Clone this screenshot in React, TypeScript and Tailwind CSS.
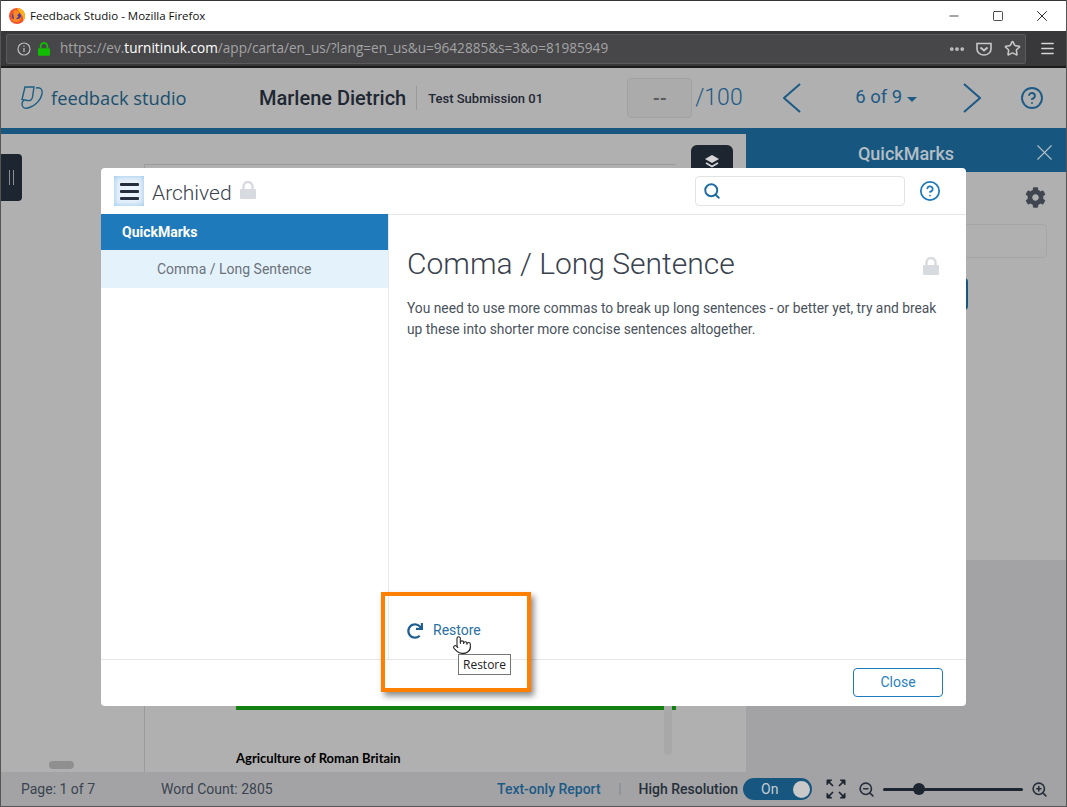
import { HelpCircle, Menu, Minus, MoreHorizontal, Pointer, Search, Square, Star, X, ZoomIn, ZoomOut } from "lucide-react"
import { FaCog, FaRedo } from "react-icons/fa"

const FirefoxLogo = () => (
  <svg width="16" height="16" viewBox="0 0 16 16" className="shrink-0">
    <circle cx="8" cy="8" r="8" fill="#f4522d" />
    <path d="M8 0a8 8 0 0 1 8 8c0 2-1 4-2 5 .6-3-.4-6-3-8-1-.8-2-2-3-5z" fill="#ffb31a" />
    <circle cx="7.5" cy="8" r="4.4" fill="#3d3ca8" />
    <path d="M5 2c2 0 5 1 5.5 3.5L8 7l1.5 1.5L7 11c2 .5 4-.5 5-2 0 3-2 5-5 5-2 0-4-1-5-3 2 1 3 0 3-1C4 8 4 4 5 2z" fill="#ff8a1f" />
  </svg>
)

const FeedbackLogo = () => (
  <svg width="24" height="26" viewBox="0 0 24 26" fill="none" stroke="#1d5f86" strokeWidth="1.4">
    <path d="M5 2h9l-1.5 10c-.4 3-2.500 4-5 3.500L2 14.500 5 2z" />
    <path d="M16 3c5-1 7 2 6 6-1 5-6 12-14 14-4 1-6-1-6-4 0-2 1-3 2-4" />
  </svg>
)

const LockIcon = ({ w, h, color }: { w: number; h: number; color: string }) => (
  <svg width={w} height={h} viewBox="0 0 16 18" className="shrink-0">
    <path d="M3.500 8V5.500a4.500 4.500 0 0 1 9 0V8" fill="none" stroke={color} strokeWidth="2.400" />
    <rect x="0" y="8" width="16" height="10" rx="1.200" fill={color} />
  </svg>
)

const Chevron = ({ flip }: { flip?: boolean }) => (
  <svg width="18" height="30" viewBox="0 0 18 30" fill="none" stroke="#1d5a85" strokeWidth="2" className="shrink-0">
    <path d={flip ? "M1 1l16 14L1 29" : "M17 1L1 15l16 14"} />
  </svg>
)

const AppHeader = () => (
  <div className="h-[60px] bg-[#b0b0b0] flex items-center shrink-0 font-['Roboto',sans-serif]">
    <div className="ml-[19px] w-[239px] flex items-center gap-[7px]">
      <FeedbackLogo />
      <span className="font-['Open_Sans',sans-serif] text-[18.300px] text-[#1a4f6e]">feedback studio</span>
    </div>
    <span className="text-[20px] font-medium text-[#1f2733] pr-[10px] border-r border-[#9a9a9a] leading-[24px]">Marlene Dietrich</span>
    <span className="ml-[11px] text-[13px] font-medium text-[#1f2733] pt-[2px] w-[199px]">Test Submission 01</span>
    <div className="w-[65px] h-[40px] rounded-[4px] border border-[#a2a2a2] bg-[#ababab] flex items-center justify-center text-[18px] font-bold text-[#5c5c5c]">--</div>
    <span className="ml-[3px] text-[23px] font-light text-[#1d5a85] w-[79px]">/100</span>
    <div className="ml-[9px]"><Chevron /></div>
    <div className="ml-[54px] w-[108px] flex items-center gap-[5px] text-[18.500px] text-[#1d5a85]">
      6 of 9
      <span className="border-x-[5px] border-t-[5px] border-x-transparent border-t-[#1d5a85] mt-[2px]" />
    </div>
    <Chevron flip />
    <HelpCircle size={24} strokeWidth={1.900} className="text-[#1d5a85] ml-[39px]" />
  </div>
)

const Footer = () => (
  <div className="h-[34px] bg-[#a3a3a5] flex items-center shrink-0 text-[14px] text-[#3a4450] font-['Roboto',sans-serif]">
    <span className="ml-[20px] w-[140px]">Page: 1 of 7</span>
    <span className="w-[336px]">Word Count: 2805</span>
    <span className="font-medium text-[#1d5a85]">Text-only Report</span>
    <span className="ml-[18px] h-[12px] border-l-2 border-[#8f959b]" />
    <span className="ml-[18px] font-medium text-[#262f3b]">High Resolution</span>
    <div className="ml-[5px] w-[69px] h-[22px] rounded-full bg-[#17577f] flex items-center justify-between pl-[18px] pr-[2px] text-[#c6ccd2]">
      On
      <span className="w-[17px] h-[17px] rounded-full bg-[#c9c9c9]" />
    </div>
    <svg width="20" height="20" viewBox="0 0 20 20" fill="none" stroke="#1d2530" strokeWidth="1.700" className="ml-[14px]">
      <path d="M2 2l5 5M13 7l5-5M2 18l5-5M13 13l5 5" />
      <path d="M1 6V1h5M14 1h5v5M1 14v5h5M19 14v5h-5" fill="#1d2530" strokeWidth="1" />
    </svg>
    <ZoomOut size={17} strokeWidth={2.300} className="ml-[12px] text-[#262f3b]" />
    <div className="ml-[8px] w-[140px] h-[3px] rounded bg-[#1d2530] relative">
      <span className="absolute left-[30px] -top-[4.500px] w-[12px] h-[12px] rounded-full bg-[#1d2530]" />
    </div>
    <ZoomIn size={17} strokeWidth={2.300} className="ml-[8px] text-[#262f3b]" />
  </div>
)

const Modal = () => (
  <div className="absolute left-[100px] top-[168px] w-[865px] h-[538px] bg-white rounded-[4px] flex flex-col font-['Roboto',sans-serif]">
    <div className="h-[46px] flex items-center shrink-0">
      <div className="ml-[13px] w-[30px] h-[30px] flex flex-col gap-[4px] items-center justify-center bg-[#e9f3fb] shadow-[inset_0_0_6px_#8fc1e8]">
        <span className="w-[19px] h-[3px] rounded-[1px] bg-[#242e3d]" />
        <span className="w-[19px] h-[3px] rounded-[1px] bg-[#242e3d]" />
        <span className="w-[19px] h-[3px] rounded-[1px] bg-[#242e3d]" />
      </div>
      <span className="ml-[8px] pt-[5px] text-[21px] font-light text-[#39424e]">Archived</span>
      <div className="ml-[8px] mb-[2px]"><LockIcon w={16} h={18} color="#d7dbe0" /></div>
      <div className="ml-auto w-[210px] h-[30px] border border-[#e3e3e3] rounded-[4px] flex items-center pl-[7px]">
        <Search size={18} strokeWidth={2.600} className="text-[#1f6ca3]" />
      </div>
      <HelpCircle size={22} strokeWidth={1.900} className="ml-[14px] mr-[25px] text-[#1d79bb]" />
    </div>
    <div className="flex flex-1 min-h-0">
      <div className="w-[288px] border-r border-[#e9e9e9] shrink-0">
        <div className="h-[36px] bg-[#1e7abb] text-white text-[14px] font-bold flex items-center pl-[21px]">QuickMarks</div>
        <div className="h-[38px] bg-[#e4f2fb] text-[#6c727a] text-[14px] flex items-center pl-[56px]">Comma / Long Sentence</div>
      </div>
      <div className="flex-1 border-t border-[#e6e6e6] pl-[18px] pr-[21px] pt-[30px] flex flex-col min-w-0">
        <div className="flex justify-between items-start">
          <h1 className="text-[30px] font-light leading-[38px] text-[#39424e]">Comma / Long Sentence</h1>
          <div className="mt-[12px] mr-[6px]"><LockIcon w={16} h={18} color="#d7dbe0" /></div>
        </div>
        <p className="mt-[15px] text-[13.800px] leading-[21px] text-[#4a525c]">
          You need to use more commas to break up long sentences - or better yet, try and break up these into shorter more concise sentences altogether.
        </p>
        <div className="mt-auto mb-[18px] flex items-center gap-[10px] text-[14px] text-[#2a6fa5]">
          <FaRedo size={16} className="text-[#1d5f8f]" />
          Restore
        </div>
      </div>
    </div>
    <div className="h-[47px] border-t border-[#e6e6e6] flex items-center justify-end pr-[23px] pb-[2px] shrink-0">
      <button className="w-[90px] h-[29px] border border-[#1e7abb] rounded-[4px] text-[14px] text-[#2a7fc0] bg-white">Close</button>
    </div>
  </div>
)

export default function App() {
  return (
    <div className="relative w-[1067px] h-[807px] overflow-hidden flex flex-col bg-[#a3a3a5] border-x border-b border-[#555]">
      {/* window chrome */}
      <div className="h-[31px] bg-white border-t border-[#333] flex items-center pl-[8px] shrink-0 text-[11.500px] text-[#111] font-['Open_Sans',sans-serif]">
        <FirefoxLogo />
        <span className="ml-[5px]">Feedback Studio - Mozilla Firefox</span>
        <Minus size={14} strokeWidth={1.300} className="ml-auto text-[#111]" />
        <Square size={12} strokeWidth={1.500} className="ml-[31px] text-[#111]" />
        <X size={18} strokeWidth={1.200} className="ml-[29px] mr-[15px] text-[#111]" />
      </div>
      <div className="h-[37px] bg-[#38383a] border-b-2 border-[#1c1c1c] flex items-center shrink-0 pl-[5px] pr-[10px]">
        <div className="flex-1 h-[30px] bg-[#474749] border border-[#5a5a5c] rounded-[2px] flex items-center pl-[10px] pr-[4px] text-[13.600px] text-[#a3a3a5] font-['Open_Sans',sans-serif]">
          <svg width="14" height="14" viewBox="0 0 14 14" fill="none" stroke="#bcbcbc" strokeWidth="1.200">
            <circle cx="7" cy="7" r="6" />
            <path d="M7 6v4M7 3.500v1.200" />
          </svg>
          <div className="ml-[7px] mr-[10px]"><LockIcon w={12} h={14} color="#12bc00" /></div>
          <span>https://ev.<span className="text-white">turnitinuk.com</span>/app/carta/en_us/?lang=en_us&amp;u=9642885&amp;s=3&amp;o=81985949</span>
          <MoreHorizontal size={18} strokeWidth={3} className="ml-auto text-[#c2c2c2]" />
          <svg width="16" height="16" viewBox="0 0 16 16" fill="none" stroke="#c8c8c8" strokeWidth="1.600" className="ml-[10px]">
            <path d="M1 2.500h14V8a7 6 0 0 1-14 0V2.500z" />
            <path d="M4.500 6.500L8 9.500l3.500-3" strokeWidth="2" />
          </svg>
          <Star size={17} strokeWidth={2.200} className="ml-[12px] text-[#c8c8c8]" />
        </div>
        <Menu size={17} strokeWidth={2} className="ml-[13px] text-[#d4d4d4]" />
      </div>

      <AppHeader />
      <div className="h-[6px] bg-[#17577f] shrink-0" />

      {/* document + side panel, dimmed by the modal */}
      <div className="flex-1 flex min-h-0">
        <div className="w-[745px] bg-[#b0b0b0] relative shrink-0">
          <div className="absolute left-0 top-[20px] w-[21px] h-[47px] rounded-r-[4px] bg-[#1d2530] flex items-center justify-center">
            <span className="w-[5px] h-[15px] border-x border-[#8c9096]" />
          </div>
          <div className="absolute left-[143px] top-[30px] w-[532px] h-[608px] border-l border-t border-[#9b9b9b] flex flex-col justify-end pl-[91px]">
            <div className="h-[4px] w-[440px] bg-[#128112] mb-[39px]" />
            <div className="text-[13px] leading-[18px] font-bold text-black font-['Lato',sans-serif] mb-[5px]">Agriculture of Roman Britain</div>
          </div>
          <div className="absolute left-[690px] top-[11px] w-[42px] h-[30px] rounded-t-[6px] bg-[#1d2530] flex justify-center pt-[9px]">
            <svg width="16" height="16" viewBox="0 0 16 16" fill="none">
              <path d="M8 1l7 4-7 4-7-4z" fill="#d6d6d6" />
              <path d="M2 9l6 3.500L14 9" stroke="#d6d6d6" strokeWidth="1.600" />
            </svg>
          </div>
          <div className="absolute left-[48px] top-[627px] w-[25px] h-[8px] rounded-full bg-[#8f8f8f]" />
          <div className="absolute left-[663px] top-[560px] w-[8px] h-[61px] rounded-full bg-[#a8a8a8]" />
        </div>
        <div className="flex-1 flex flex-col font-['Roboto',sans-serif]">
          <div className="h-[38px] bg-[#17577f] flex items-center justify-center relative shrink-0">
            <span className="text-[18px] font-medium text-[#b4bec6]">QuickMarks</span>
            <X size={27} strokeWidth={1} className="absolute right-[8px] top-[5px] text-[#b4bec6]" />
          </div>
          <div className="h-[388px] bg-[#b0b0b0] relative shrink-0">
            <FaCog size={21} className="absolute right-[20px] top-[15px] text-[#3f4650]" />
            <div className="absolute right-[19px] top-[52px] left-0 h-[34px] rounded-[4px] border border-[#a6a6a6]" />
            <div className="absolute left-0 top-[106px] w-[222px] h-[32px] rounded-[4px] bg-[#17577f]" />
          </div>
        </div>
      </div>

      <Footer />
      <Modal />

      {/* screenshot annotation */}
      <div className="absolute left-[380px] top-[592px] w-[150px] h-[100px] border-[4px] border-[#ff8000] shadow-[3px_4px_6px_rgba(0,0,0,0.45)]" />
      <Pointer size={20} fill="white" strokeWidth={1.300} className="absolute left-[451px] top-[635px] text-[#222]" />
      <div className="absolute left-[457px] top-[654px] w-[53px] h-[21px] bg-white border border-[#767676] flex items-center justify-center text-[12px] text-[#222] font-['Open_Sans',sans-serif]">Restore</div>
    </div>
  )
}
